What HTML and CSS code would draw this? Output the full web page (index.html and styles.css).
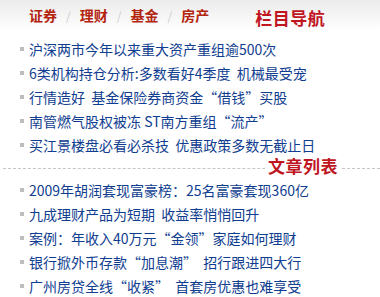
FILE: index.html
```html
<!DOCTYPE html>
<html lang="zh-CN">
<head>
    <meta charset="UTF-8">
    <title>栏目导航</title>
    <link rel="stylesheet" href="styles.css">
</head>
<body>

    <div class="header">
        <ul class="nav">
            <li><a href="#">证券</a></li>
            <li class="sep">/</li>
            <li><a href="#">理财</a></li>
            <li class="sep">/</li>
            <li><a href="#">基金</a></li>
            <li class="sep">/</li>
            <li><a href="#">房产</a></li>
        </ul>
        <span class="label">栏目导航</span>
    </div>

    <ul class="news">
        <li><a href="#">沪深两市今年以来重大资产重组逾500次</a></li>
        <li><a href="#">6类机构持仓分析:多数看好4季度&nbsp; 机械最受宠</a></li>
        <li><a href="#">行情造好&nbsp; 基金保险券商资金“借钱”买股</a></li>
        <li><a href="#">南管燃气股权被冻 ST南方重组“流产”</a></li>
        <li><a href="#">买江景楼盘必看必杀技&nbsp; 优惠政策多数无截止日</a></li>
    </ul>

    <!-- divider with title over the dashed line -->
    <div class="divider">
        <span class="label">文章列表</span>
    </div>

    <ul class="news">
        <li><a href="#">2009年胡润套现富豪榜：25名富豪套现360亿</a></li>
        <li><a href="#">九成理财产品为短期&nbsp; 收益率悄悄回升</a></li>
        <li><a href="#">案例：年收入40万元“金领”家庭如何理财</a></li>
        <li><a href="#">银行掀外币存款“加息潮”&nbsp; 招行跟进四大行</a></li>
        <li><a href="#">广州房贷全线“收紧”&nbsp; 首套房优惠也难享受</a></li>
    </ul>

</body>
</html>
```

FILE: styles.css
```css
* {
    margin: 0;
    padding: 0;
    box-sizing: border-box;
}

body {
    font-family: "Noto Sans CJK SC", "Noto Sans", sans-serif;
    background: #fff;
    width: 380px;
    overflow: hidden;
}

a {
    text-decoration: none;
}

ul {
    list-style: none;
}

.header {
    display: flex;
    align-items: center;
    height: 30px;
    padding-left: 29px;
    background: linear-gradient(#ebebeb, #fff);
}

.nav {
    display: flex;
    align-items: center;
}

.nav a {
    color: #b3240f;
    font-size: 14px;
    font-weight: bold;
    line-height: 30px;
}

.nav .sep {
    color: #cfcfcf;
    font-size: 12px;
    margin: 0 9px;
}

.header .label {
    margin-left: 46px;
    margin-top: 4px;
}

.label {
    color: #c0161f;
    font-size: 17px;
    font-weight: bold;
    letter-spacing: 0.5px;
}

.news {
    padding-left: 20px;
}

.header + .news {
    margin-top: 7px;
}

.news li {
    display: flex;
    align-items: center;
    height: 24px;
}

.news li::before {
    content: "";
    width: 4px;
    height: 4px;
    background: #bdbdbd;
    margin-right: 5px;
}

.news a {
    color: #0f3d8f;
    font-size: 14px;
    white-space: nowrap;
}

.divider {
    position: relative;
    margin: 11px 0 9px 3px;
    border-top: 1px dashed #c6c6c6;
}

.divider .label {
    position: absolute;
    left: 262px;
    top: -13px;
    padding: 0 3px;
    background: #fff;
    line-height: 20px;
}
```
